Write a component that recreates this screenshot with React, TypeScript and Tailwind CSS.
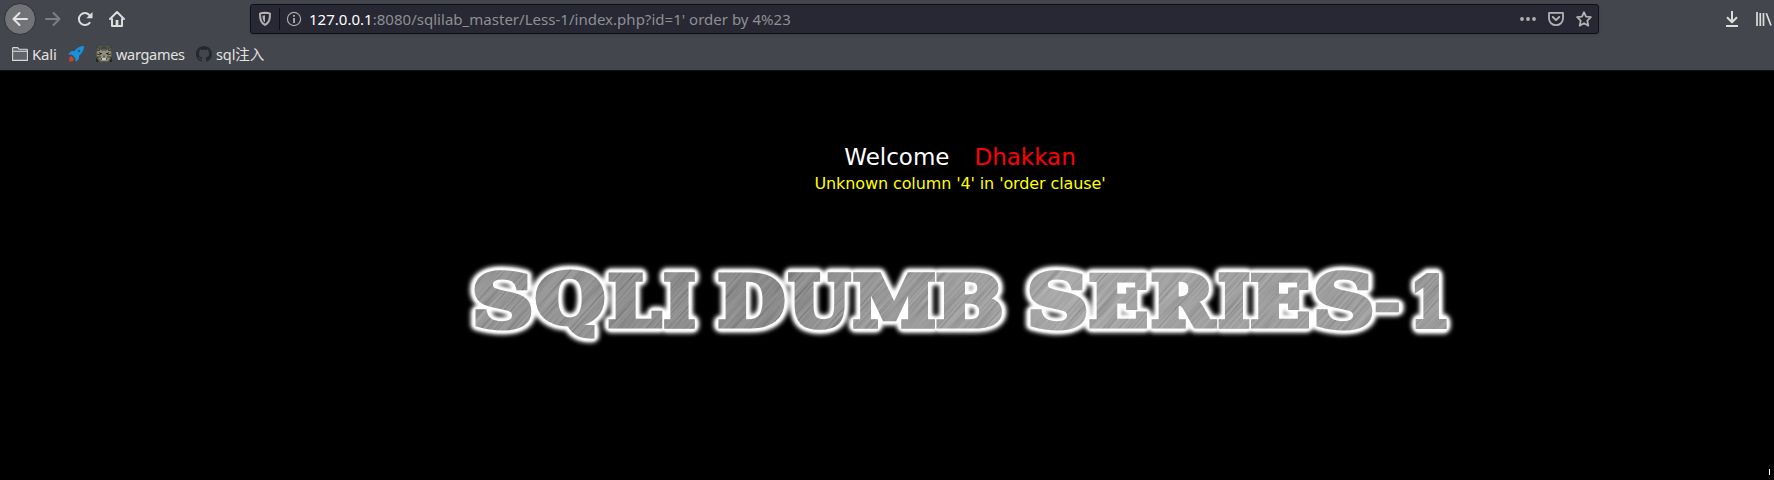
import React, { useMemo } from "react";

type Glyph = { ch: string; x0: number; x1: number; y0: number; y1: number };

const TOP = 272.5;
const BASE = 328.5;

const GLYPHS: Glyph[] = [
  { ch: "S", x0: 474.5, x1: 531, y0: 270, y1: 330.5 },
  { ch: "Q", x0: 535.5, x1: 605, y0: 269.5, y1: 340 },
  { ch: "L", x0: 608, x1: 662.5, y0: TOP, y1: BASE },
  { ch: "I", x0: 663.5, x1: 695, y0: TOP, y1: BASE },
  { ch: "D", x0: 718, x1: 785.5, y0: TOP, y1: BASE },
  { ch: "U", x0: 787.5, x1: 852, y0: TOP, y1: 329.5 },
  { ch: "M", x0: 853, x1: 935, y0: TOP, y1: BASE },
  { ch: "B", x0: 936, x1: 1002.5, y0: TOP, y1: BASE },
  { ch: "S", x0: 1029.5, x1: 1086, y0: 270, y1: 330.5 },
  { ch: "E", x0: 1089, x1: 1147, y0: TOP, y1: BASE },
  { ch: "R", x0: 1151, x1: 1217, y0: TOP, y1: BASE },
  { ch: "I", x0: 1218, x1: 1249.5, y0: TOP, y1: BASE },
  { ch: "E", x0: 1250.5, x1: 1309, y0: TOP, y1: BASE },
  { ch: "S", x0: 1315.5, x1: 1372, y0: 270, y1: 330.5 },
  { ch: "-", x0: 1376, x1: 1398.5, y0: 302, y1: 313 },
  { ch: "1", x0: 1414, x1: 1447, y0: TOP, y1: BASE },
];

const FONT = 'bold 80px "DejaVu Serif"';
const WEIGHT = 5.5;

function useGlyphs() {
  return useMemo(() => {
    const ctx = document.createElement("canvas").getContext("2d")!;
    ctx.font = FONT;
    return GLYPHS.map((g) => {
      const m = ctx.measureText(g.ch);
      const h = WEIGHT / 2;
      const left = -m.actualBoundingBoxLeft;
      const top = -m.actualBoundingBoxAscent;
      const sx = (g.x1 - g.x0 - WEIGHT) / (m.actualBoundingBoxRight - left);
      const sy = (g.y1 - g.y0 - WEIGHT) / (m.actualBoundingBoxDescent - top);
      return {
        ch: g.ch,
        scale: Math.sqrt(sx * sy),
        transform: `translate(${g.x0 + h - left * sx} ${g.y0 + h - top * sy}) scale(${sx} ${sy})`,
      };
    });
  }, []);
}

function Banner() {
  const glyphs = useGlyphs();
  const letters = (color: string, width: number, join: "round" | "miter") => (
    <g fill={color} stroke={color} strokeLinejoin={join}>
      {glyphs.map((g, i) => (
        <text
          key={i}
          transform={g.transform}
          strokeWidth={width / g.scale}
          fontFamily='"DejaVu Serif", serif'
          fontWeight="bold"
          fontSize="80"
        >
          {g.ch}
        </text>
      ))}
    </g>
  );
  return (
    <svg className="block" width="1020" height="110" viewBox="450 250 1020 110" aria-label="SQLI DUMB SERIES-1">
      <defs>
        <linearGradient id="metal" gradientUnits="userSpaceOnUse" x1="470" y1="0" x2="1450" y2="0">
          <stop offset="0" stopColor="#8c8c8c" />
          <stop offset="0.15" stopColor="#828282" />
          <stop offset="0.3" stopColor="#7b7b7b" />
          <stop offset="0.42" stopColor="#8e8e8e" />
          <stop offset="0.6" stopColor="#a0a0a0" />
          <stop offset="0.8" stopColor="#979797" />
          <stop offset="1" stopColor="#929292" />
        </linearGradient>
        <filter id="streaks" x="0" y="0" width="100%" height="100%">
          <feTurbulence type="fractalNoise" baseFrequency="0.012 0.55" numOctaves="3" seed="4" />
          <feColorMatrix values="1.4 0 0 0 -0.2  1.4 0 0 0 -0.2  1.4 0 0 0 -0.2  0 0 0 0 1" />
        </filter>
        <filter id="soft" x="-5%" y="-30%" width="110%" height="160%">
          <feGaussianBlur stdDeviation="2" />
        </filter>
        <filter id="edge" x="-5%" y="-30%" width="110%" height="160%">
          <feGaussianBlur stdDeviation="0.8" />
        </filter>
        <mask id="face" maskUnits="userSpaceOnUse" x="450" y="250" width="1020" height="110">
          {letters("#fff", WEIGHT, "miter")}
        </mask>
      </defs>
      <g filter="url(#soft)">{letters("#fff", WEIGHT + 9, "round")}</g>
      <g filter="url(#edge)">{letters("#fff", WEIGHT + 5, "round")}</g>
      <g mask="url(#face)">
        <rect x="450" y="250" width="1020" height="110" fill="url(#metal)" />
        <g opacity="0.24">
          <g transform="rotate(-48 960 305)">
            <rect x="560" y="-100" width="800" height="810" filter="url(#streaks)" />
          </g>
        </g>
      </g>
    </svg>
  );
}

const Back = () => (
  <svg width="16" height="16" viewBox="0 0 16 16" fill="none" stroke="#e4e4e4" strokeWidth="2" strokeLinecap="round" strokeLinejoin="round">
    <path d="M15 8H1.5M7.5 2L1.5 8l6 6" />
  </svg>
);
const Forward = () => (
  <svg width="16" height="16" viewBox="0 0 16 16" fill="none" stroke="#7d7f83" strokeWidth="2" strokeLinecap="round" strokeLinejoin="round">
    <path d="M1 8h13.5M8.5 2l6 6-6 6" />
  </svg>
);
const Reload = () => (
  <svg width="16" height="16" viewBox="0 0 16 16" fill="none" stroke="#dcdcda" strokeWidth="2" strokeLinecap="round">
    <path d="M12.6 11.8A6 6 0 1 1 12.3 4" />
    <path d="M15.5 1v6.2H9.3z" fill="#dcdcda" stroke="none" />
  </svg>
);
const Home = () => (
  <svg width="16" height="16" viewBox="0 0 16 16" fill="none" stroke="#dcdcda" strokeWidth="2" strokeLinecap="round" strokeLinejoin="round">
    <path d="M1 8l7-7 7 7M3 8v7h10V8" />
    <path d="M6.6 9h2.8v6H6.6z" fill="#dcdcda" stroke="none" />
  </svg>
);
const Shield = () => (
  <svg width="14" height="16" viewBox="0 0 14 16" fill="none" stroke="#b2b2b4" strokeWidth="2" strokeLinejoin="round">
    <path d="M7 1.800c2 .1 3.800.3 5 .8 0 6-.8 9-5 11.400C2.800 11.600 2 8.600 2 2.600c1.200-.5 3-.7 5-.8z" />
    <path d="M7 4.300v7.200C5 9.800 4.600 8 4.500 4.700z" fill="#b2b2b4" stroke="none" />
  </svg>
);
const Info = () => (
  <svg width="16" height="16" viewBox="0 0 16 16" fill="none" stroke="#a6a7aa" strokeWidth="1.200">
    <circle cx="8" cy="8" r="6.600" />
    <path d="M8 7v5M8 4v1.800" strokeWidth="1.900" />
  </svg>
);
const Dots = () => (
  <svg width="16" height="16" viewBox="0 0 16 16" fill="#b2b2b4">
    <circle cx="2" cy="8" r="1.900" />
    <circle cx="8" cy="8" r="1.900" />
    <circle cx="14" cy="8" r="1.900" />
  </svg>
);
const Pocket = () => (
  <svg width="16" height="16" viewBox="0 0 16 16" fill="none" stroke="#b2b2b4" strokeWidth="1.800" strokeLinejoin="round" strokeLinecap="round">
    <path d="M1 1.900h14V7.500a7 6.700 0 0 1-14 0z" />
    <path d="M4.800 6L8 9.100 11.200 6" strokeWidth="2" />
  </svg>
);
const Star = () => (
  <svg width="16" height="16" viewBox="0 0 16 16" fill="none" stroke="#b2b2b4" strokeWidth="1.800" strokeLinejoin="round">
    <path d="M8 1.200l2 4.500 4.900.5-3.600 3.400 1 5L8 12.200l-4.300 2.400 1-5L1.100 6.200 6 5.700z" />
  </svg>
);
const Download = () => (
  <svg width="14" height="16" viewBox="0 0 14 16" fill="none" stroke="#dcdcda" strokeWidth="2">
    <path d="M7 0v11M2 6.300l5 5 5-5M1 15h12" strokeLinejoin="round" />
  </svg>
);
const Library = () => (
  <svg width="16" height="14" viewBox="0 0 16 14" fill="none" stroke="#dcdcda" strokeWidth="1.700">
    <path d="M1 0v14M4.300 1v13M7.500 1v13M10.300 1.300l4.700 12.200" />
  </svg>
);
const Folder = () => (
  <svg width="16" height="14" viewBox="0 0 16 14" fill="none" stroke="#d6d6d6" strokeWidth="1.100" strokeLinejoin="round">
    <path d="M.6 13.400V1.300q0-.7.700-.7h4.400l1.500 1.700h7.600q.6 0 .6.700v10.400z" fill="#606369" />
    <path d="M.6 4.300h14.800" />
  </svg>
);
const Rocket = () => (
  <svg width="16" height="16" viewBox="0 0 16 16">
    <path d="M16 0c-4 0-7 1.500-9.500 5L3 5.300 0 8.600l3.500.2 3.800 3.800.4 3.400 3-2.800.5-3.500C14.500 7 16 4 16 0z" fill="#1593dc" />
    <circle cx="11" cy="5" r="1.300" fill="#34536c" />
    <path d="M3 9.800L.2 13l1.600-.3L.8 16l2.800-1 .1 1 2.800-2.900z" fill="#c5432f" />
    <path d="M3.700 8.600l3.800 3.800" stroke="#435c72" />
  </svg>
);
const Cat = () => (
  <svg width="16" height="16" viewBox="0 0 16 16">
    <path d="M0 0h16v16H0z" fill="#55574a" />
    <path d="M1 1l3 3 2-1h4l2 1 3-3v9l-3 5H5l-4-5z" fill="#908f80" />
    <path d="M1 0l3 4-3 1zM15 0l-3 4 3 1zM6 1v4M8 0v5M10 1v4M1 8l3 1M1 11l4 0M15 8l-3 1M15 11h-4M5 14l1-2M11 14l-1-2" fill="#77766a" stroke="#35362e" />
    <path d="M3 6l3.500 1.700-2.500 1zM13 6L9.500 7.700l2.500 1z" fill="#1b1c18" />
    <path d="M7 9.500h2l-.5 2h-1z" fill="#5b4540" />
    <path d="M6 12h4v2H6z" fill="#c8c6ba" />
    <path d="M0 11l3 5H0zM16 11l-3 5h3z" fill="#25261f" />
  </svg>
);
const Octocat = () => (
  <svg width="16" height="16" viewBox="0 0 16 16" fill="#25292e">
    <path d="M8 0C3.580 0 0 3.580 0 8c0 3.540 2.290 6.530 5.470 7.590.4.070.55-.17.55-.38 0-.19-.01-.82-.01-1.490-2.010.37-2.530-.49-2.690-.94-.09-.23-.48-.94-.82-1.130-.28-.15-.68-.52-.01-.53.63-.01 1.080.58 1.230.82.72 1.210 1.870.87 2.330.66.07-.52.28-.87.51-1.070-1.780-.2-3.640-.89-3.640-3.950 0-.87.31-1.590.82-2.150-.08-.2-.36-1.020.08-2.120 0 0 .67-.21 2.200.82.64-.18 1.320-.27 2-.27s1.360.09 2 .27c1.530-1.040 2.200-.82 2.200-.82.44 1.100.16 1.920.08 2.120.51.56.82 1.270.82 2.150 0 3.070-1.870 3.750-3.650 3.950.29.25.54.73.54 1.480 0 1.070-.01 1.930-.01 2.200 0 .21.150.46.550.38A8.010 8.010 0 0 0 16 8c0-4.420-3.580-8-8-8z" />
  </svg>
);

export default function App() {
  return (
    <div className="flex h-[480px] w-[1774px] flex-col overflow-hidden bg-black">
      <header className="flex h-[71px] shrink-0 flex-col border-b border-[#101114] bg-[#43464d] font-['Noto_Sans','Noto_Sans_CJK_SC',sans-serif]">
        <div className="flex h-[38px] items-center">
          <div className="ml-1 flex size-8 shrink-0 items-center justify-center rounded-full border border-[#2d2f33] bg-[#727377]"><Back /></div>
          <div className="ml-[9px]"><Forward /></div>
          <div className="ml-4"><Reload /></div>
          <div className="ml-4"><Home /></div>
          <div className="ml-[125px] flex h-[30px] w-[1349px] shrink-0 items-center rounded-[3px] border border-[#101116] bg-[#272833] shadow-[0_1px_3px_rgba(0,0,0,0.15)]">
            <div className="ml-[7px]"><Shield /></div>
            <div className="ml-[7px] h-[22px] w-px bg-[#0f1014]" />
            <div className="ml-[6px]"><Info /></div>
            <div className="ml-[7px] whitespace-pre text-[15px] leading-5 tracking-[0.02px] text-[#8e8f94]"><span className="text-white">127.0.0.1</span>:8080/sqlilab_master/Less-1/index.php?id=1' order by 4%23</div>
            <div className="ml-auto mr-[6px] flex gap-3"><Dots /><Pocket /><Star /></div>
          </div>
          <div className="ml-[126px]"><Download /></div>
          <div className="ml-[17px] shrink-0"><Library /></div>
        </div>
        <div className="flex h-8 items-center whitespace-nowrap text-[15px] leading-5 text-[#e2e2e0]">
          <div className="ml-3 mr-1"><Folder /></div>
          <span className="w-6 tracking-[-0.2px]">Kali</span>
          <div className="ml-3"><Rocket /></div>
          <div className="ml-3 mr-1"><Cat /></div>
          <span className="w-[68px] text-[14.5px] tracking-[-0.3px]">wargames</span>
          <div className="ml-3 mr-1"><Octocat /></div>
          <span className="text-[14.5px] tracking-[-0.1px]">sql注入</span>
        </div>
      </header>
      <main className="flex flex-col items-center pl-[146px] pt-[72px] font-['DejaVu_Sans',sans-serif]">
        <div className="flex h-7 items-center gap-[25px] whitespace-nowrap text-[23px] leading-7">
          <span className="text-white">Welcome</span>
          <span className="text-[#ff0000]">Dhakkan</span>
        </div>
        <div className="h-6 whitespace-nowrap pt-px text-[16px] leading-6 tracking-[-0.11px] text-[#ffff00]">Unknown column '4' in 'order clause'</div>
        <div className="mt-[55px]"><Banner /></div>
      </main>
      <footer className="mt-auto flex h-[11px] shrink-0 justify-end pr-1">
        <div className="h-1.5 w-px bg-white" />
      </footer>
    </div>
  );
}
